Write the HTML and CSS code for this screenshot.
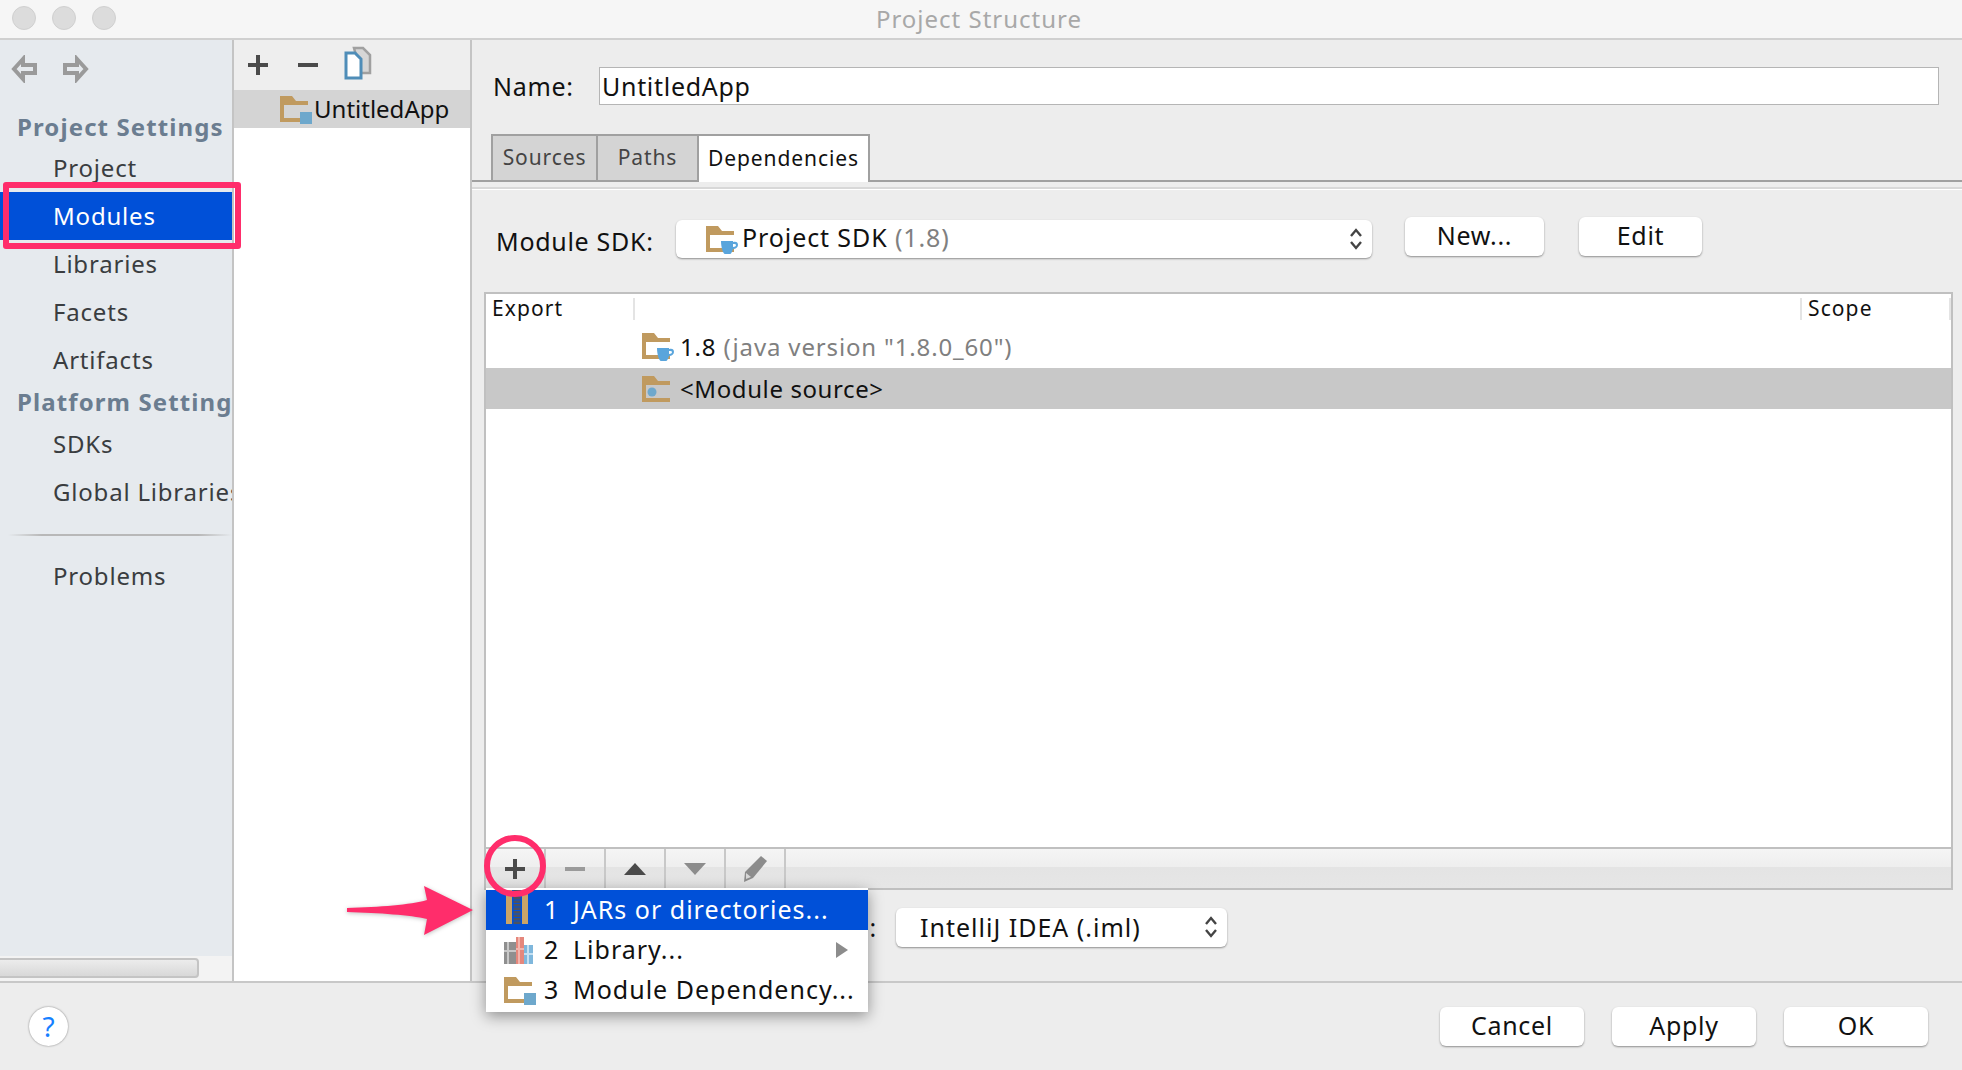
FILE: index.html
```html
<!DOCTYPE html>
<html lang="en">
<head>
    <meta charset="UTF-8">
    <title>Project Structure</title>
    <link rel="stylesheet" href="styles.css">
</head>
<body>
    <svg class="defs" width="0" height="0">
        <symbol id="folder" viewBox="0 0 30 26">
            <path fill="#c09a5f" fill-rule="evenodd" d="M0 0h12l4 5h12v21H0zM4 9v13h24V9z"/>
        </symbol>
    </svg>

    <div class="window">
        <div class="titlebar">
            <div class="lights"><i></i><i></i><i></i></div>
            <div class="title">Project Structure</div>
        </div>

        <div class="content">
            <!-- left nav -->
            <div class="sidebar">
                <div class="history">
                    <svg width="28" height="28" viewBox="0 0 28 28"><path fill="none" stroke="#9a9a9a" stroke-width="4" d="M13 4L4 14l9 10v-6h12v-8H13z"/></svg>
                    <svg width="28" height="28" viewBox="0 0 28 28"><path fill="none" stroke="#9a9a9a" stroke-width="4" d="M15 4l9 10-9 10v-6H3v-8h12z"/></svg>
                </div>
                <div class="nav">
                    <div class="nav-head first">Project Settings</div>
                    <div class="nav-item">Project</div>
                    <div class="nav-item active">Modules</div>
                    <div class="nav-item">Libraries</div>
                    <div class="nav-item">Facets</div>
                    <div class="nav-item">Artifacts</div>
                    <div class="nav-head">Platform Settings</div>
                    <div class="nav-item">SDKs</div>
                    <div class="nav-item">Global Libraries</div>
                    <div class="nav-sep"></div>
                    <div class="nav-item">Problems</div>
                </div>
                <div class="scrollbar"><div class="thumb"></div></div>
            </div>

            <!-- module list -->
            <div class="modules">
                <div class="mod-toolbar">
                    <svg width="20" height="20" viewBox="0 0 20 20"><path fill="#4a4a4a" d="M8 0h4v8h8v4h-8v8H8v-8H0V8h8z"/></svg>
                    <svg width="20" height="20" viewBox="0 0 20 20"><path fill="#4a4a4a" d="M0 8h20v4H0z"/></svg>
                    <svg class="copy-icon" width="30" height="34" viewBox="0 0 30 34">
                        <path fill="#d6d6d6" stroke="#a0a0a0" stroke-width="2.5" d="M11 2h9l7 7v18h-9z"/>
                        <path fill="#fff" stroke="#4f8db8" stroke-width="3" d="M3 7h9l6 6v19H3z"/>
                    </svg>
                </div>
                <div class="mod-row">
                    <span class="folder-icon">
                        <svg width="30" height="26"><use href="#folder"/></svg>
                        <b class="dot-square"></b>
                    </span>
                    <span class="mod-name">UntitledApp</span>
                </div>
            </div>

            <!-- main panel -->
            <div class="main">
                <div class="name-row">
                    <label>Name:</label>
                    <div class="text-field">UntitledApp</div>
                </div>
                <div class="tabs">
                    <div class="tab">Sources</div>
                    <div class="tab">Paths</div>
                    <div class="tab current">Dependencies</div>
                </div>
                <div class="tab-rule"></div>
                <div class="sdk-row">
                    <label>Module SDK:</label>
                    <div class="combo sdk-combo">
                        <span class="folder-icon">
                            <svg width="30" height="26"><use href="#folder"/></svg>
                            <svg class="cup" width="17" height="13" viewBox="0 0 17 13"><path fill="#5aa5dc" d="M0 0h12v1c4-1 5 1 5 3s-2 4-5 4c-1 3-2 5-3 5H4C2 13 0 6 0 0zm12 3v3c2 0 3-1 3-2s-1-1-3-1z"/></svg>
                        </span>
                        <span class="sdk-text">Project SDK <em>(1.8)</em></span>
                        <svg class="updown" width="14" height="24" viewBox="0 0 14 24"><path fill="none" stroke="#444" stroke-width="2.4" d="M2 9l5-6 5 6M2 15l5 6 5-6"/></svg>
                    </div>
                    <div class="btn new-btn">New...</div>
                    <div class="btn edit-btn">Edit</div>
                </div>

                <div class="table">
                    <div class="thead">
                        <div class="th export">Export</div>
                        <div class="th blank"></div>
                        <div class="th scope">Scope</div>
                    </div>
                    <div class="tbody">
                        <div class="tr">
                            <span class="folder-icon">
                                <svg width="30" height="26"><use href="#folder"/></svg>
                                <svg class="cup" width="17" height="13" viewBox="0 0 17 13"><path fill="#5aa5dc" d="M0 0h12v1c4-1 5 1 5 3s-2 4-5 4c-1 3-2 5-3 5H4C2 13 0 6 0 0zm12 3v3c2 0 3-1 3-2s-1-1-3-1z"/></svg>
                            </span>
                            <span>1.8 <em>(java version "1.8.0_60")</em></span>
                        </div>
                        <div class="tr selected">
                            <span class="folder-icon">
                                <svg width="30" height="26"><use href="#folder"/><circle cx="10" cy="16" r="4.5" fill="#6ea8cc"/></svg>
                            </span>
                            <span>&lt;Module source&gt;</span>
                        </div>
                    </div>
                    <div class="table-tools">
                        <div class="tool">
                            <svg width="20" height="20" viewBox="0 0 20 20"><path fill="#4a4a4a" d="M8 0h4v8h8v4h-8v8H8v-8H0V8h8z"/></svg>
                        </div>
                        <div class="tool">
                            <svg width="20" height="20" viewBox="0 0 20 20"><path fill="#9a9a9a" d="M0 8h20v4H0z"/></svg>
                        </div>
                        <div class="tool">
                            <svg width="22" height="12" viewBox="0 0 22 12"><path fill="#4a4a4a" d="M11 0l11 12H0z"/></svg>
                        </div>
                        <div class="tool">
                            <svg width="22" height="12" viewBox="0 0 22 12"><path fill="#8c8c8c" d="M11 12L0 0h22z"/></svg>
                        </div>
                        <div class="tool">
                            <svg width="24" height="26" viewBox="0 0 24 26"><path fill="#8c8c8c" d="M18 0l6 5-14 17-9 4 1-10z"/><path fill="#d8d8d8" d="M3 17l5 4-5 2z"/></svg>
                        </div>
                    </div>
                </div>

                <div class="format-row">
                    <label>:</label>
                    <div class="combo format-combo">
                        <span>IntelliJ IDEA (.iml)</span>
                        <svg class="updown" width="14" height="24" viewBox="0 0 14 24"><path fill="none" stroke="#444" stroke-width="2.4" d="M2 9l5-6 5 6M2 15l5 6 5-6"/></svg>
                    </div>
                </div>
            </div>
        </div>

        <div class="footer">
            <div class="help">?</div>
            <div class="footer-btns">
                <div class="btn">Cancel</div>
                <div class="btn">Apply</div>
                <div class="btn">OK</div>
            </div>
        </div>

        <!-- add dependency menu -->
        <div class="popup">
            <div class="menu-row on">
                <span class="menu-icon zip">
                    <svg width="22" height="34" viewBox="0 0 22 34">
                        <path fill="#c9a468" d="M0 0h6v34H0zM16 0h6v34h-6z"/>
                        <path fill="none" stroke="#4a5262" stroke-width="7" stroke-dasharray="2.5 1" d="M11 0v34"/>
                    </svg>
                </span>
                <span class="num">1</span><span class="label">JARs or directories...</span>
            </div>
            <div class="menu-row">
                <span class="menu-icon">
                    <svg width="29" height="27" viewBox="0 0 29 27">
                        <path fill="#8f8f8f" d="M0 5h12v22H0z"/>
                        <path fill="#c8c8c8" d="M3 5h2v22H3zM0 13h12v2H0z"/>
                        <path fill="#e5877c" d="M12 0h8v27h-8z"/>
                        <path fill="#f3b5ad" d="M14 0h2v27h-2zM12 11h8v2h-8z"/>
                        <path fill="#7fb7dc" d="M20 8h9v19h-9z"/>
                        <path fill="#c5e0f2" d="M23 8h2v19h-2zM20 16h9v2h-9z"/>
                    </svg>
                </span>
                <span class="num">2</span><span class="label">Library...</span>
                <i class="submenu"></i>
            </div>
            <div class="menu-row">
                <span class="menu-icon">
                    <span class="folder-icon">
                        <svg width="30" height="26"><use href="#folder"/></svg>
                        <b class="dot-square"></b>
                    </span>
                </span>
                <span class="num">3</span><span class="label">Module Dependency...</span>
            </div>
        </div>

        <!-- annotations -->
        <div class="mark-box"></div>
        <div class="mark-circle"></div>
        <svg class="mark-arrow" width="140" height="64" viewBox="0 0 140 64">
            <path fill="#ff2d6b" d="M7 28C40 27 70 25 87 20L84 6l49 24-49 25 3-16C70 35 40 33 7 32z"/>
        </svg>
    </div>
</body>
</html>
```

FILE: styles.css
```css
*{
    padding: 0;
    margin: 0;
    box-sizing: border-box;
}

body{
    width: 1962px;
    height: 1070px;
    overflow: hidden;
    font-family: "Noto Sans", sans-serif;
    font-size: 25px;
    letter-spacing: .7px;
    color: #111;
    background-color: #ededed;
}

.defs{
    display: block;
}

em{
    font-style: normal;
    color: #808080;
}

.window{
    width: 1962px;
    height: 1070px;
    display: flex;
    flex-direction: column;
    position: relative;
}

/* title bar */
.titlebar{
    height: 40px;
    flex: none;
    display: flex;
    align-items: center;
    justify-content: center;
    position: relative;
    background-color: #f6f6f6;
    border-bottom: 2px solid #d0d0d0;
}

.lights{
    position: absolute;
    left: 12px;
    top: 6px;
    display: flex;
    gap: 16px;
}

.lights i{
    width: 24px;
    height: 24px;
    border-radius: 50%;
    background-color: #dcdcdc;
    border: 1px solid #d0d0d0;
}

.title{
    color: #a8a8a8;
    font-size: 24px;
    letter-spacing: 1px;
    padding: 0 0 2px 0;
    margin-left: -4px;
}

.content{
    flex: 1;
    display: flex;
    min-height: 0;
    border-bottom: 2px solid #c8c8c8;
}

/* left nav */
.sidebar{
    width: 234px;
    flex: none;
    display: flex;
    flex-direction: column;
    background-color: #e6eaee;
    border-right: 2px solid #c4c4c4;
    overflow: hidden;
}

.history{
    height: 70px;
    flex: none;
    display: flex;
    gap: 24px;
    padding: 15px 0 0 10px;
}

.nav{
    flex: 1;
    white-space: nowrap;
    font-size: 24px;
    letter-spacing: .8px;
}

.nav-head{
    height: 36px;
    line-height: 36px;
    padding-left: 17px;
    font-weight: 700;
    letter-spacing: 1.1px;
    color: #6b7d90;
}

.nav-head.first{
    height: 34px;
    line-height: 34px;
}

.nav-item{
    height: 48px;
    line-height: 48px;
    padding-left: 53px;
    color: #3a3d40;
}

.nav-item.active{
    background-color: #0050d8;
    color: #fff;
}

.nav-sep{
    height: 2px;
    margin: 18px 0 16px 8px;
    background: linear-gradient(to right, transparent, #b8b8b8 15%, #b8b8b8 85%, transparent);
}

.scrollbar{
    height: 25px;
    flex: none;
    padding-top: 2px;
    background-color: #f3f3f3;
}

.thumb{
    width: 199px;
    height: 20px;
    border: 2px solid #c4c4c4;
    border-left: 0;
    border-radius: 0 4px 4px 0;
    background: linear-gradient(#ececec, #d8d8d8);
}

/* module list */
.modules{
    width: 238px;
    flex: none;
    background-color: #fff;
    border-right: 2px solid #c4c4c4;
}

.mod-toolbar{
    height: 50px;
    display: flex;
    align-items: center;
    gap: 30px;
    padding-left: 14px;
    background-color: #eee;
}

.copy-icon{
    margin: -4px 0 0 -5px;
}

.mod-row{
    height: 38px;
    display: flex;
    align-items: center;
    gap: 4px;
    padding-left: 46px;
    background-color: #d4d4d4;
    font-size: 24px;
    letter-spacing: 0;
}

.mod-name{
    margin-top: -2px;
}

.folder-icon{
    width: 30px;
    height: 26px;
    flex: none;
    display: block;
    position: relative;
}

.folder-icon svg{
    display: block;
}

.dot-square{
    position: absolute;
    right: -2px;
    bottom: -2px;
    width: 12px;
    height: 12px;
    background-color: #6ea8cc;
}

.folder-icon .cup{
    position: absolute;
    right: -2px;
    bottom: -2px;
}

/* main panel */
.main{
    flex: 1;
    min-width: 0;
    padding: 27px 0 0;
}

.name-row{
    height: 38px;
    display: flex;
    align-items: center;
    margin: 0 23px 0 21px;
}

.name-row label{
    width: 106px;
}

.text-field{
    flex: 1;
    height: 38px;
    line-height: 36px;
    padding-left: 2px;
    background-color: #fff;
    border: 1px solid #b5b5b5;
}

.tabs{
    height: 48px;
    display: flex;
    margin-top: 29px;
    padding-left: 19px;
    border-bottom: 2px solid #a0a0a0;
    font-size: 21px;
    letter-spacing: .9px;
}

.tab{
    height: 48px;
    display: flex;
    align-items: center;
    justify-content: center;
    padding-bottom: 3px;
    background-color: #d4d4d4;
    color: #444;
    border: 2px solid #a0a0a0;
    border-left-width: 2px;
}

.tab:nth-child(1){
    width: 107px;
}

.tab:nth-child(2){
    width: 101px;
    border-left: 0;
}

.tab.current{
    width: 171px;
    border-left: 0;
    border-bottom: 0;
    background-color: #fff;
    color: #111;
}

.tab-rule{
    height: 3px;
    margin-top: 5px;
    background-color: #d8d8d8;
    border-bottom: 1px solid #fff;
}

.sdk-row{
    height: 42px;
    display: flex;
    align-items: flex-start;
    margin-top: 27px;
    padding-left: 24px;
}

.sdk-row label{
    width: 180px;
    padding-top: 7px;
}

.combo{
    height: 38px;
    display: flex;
    align-items: center;
    position: relative;
    background-color: #fff;
    border-radius: 6px;
    box-shadow: 0 1px 2px rgba(0, 0, 0, .4);
}

.sdk-combo{
    width: 696px;
    margin-top: 3px;
    padding-left: 30px;
    gap: 6px;
}

.sdk-text{
    margin-top: -4px;
    letter-spacing: .9px;
}

.updown{
    position: absolute;
    right: 9px;
    top: 7px;
}

.btn{
    width: 144px;
    height: 39px;
    display: flex;
    align-items: center;
    justify-content: center;
    padding-bottom: 3px;
    background-color: #fff;
    border-radius: 6px;
    box-shadow: 0 1px 2px rgba(0, 0, 0, .4);
}

.new-btn{
    width: 139px;
    margin-left: 33px;
}

.edit-btn{
    width: 123px;
    margin-left: 35px;
}

.table{
    height: 598px;
    margin: 33px 9px 0 12px;
    display: flex;
    flex-direction: column;
    background-color: #fff;
    border: 2px solid #c0c0c0;
    font-size: 21px;
    letter-spacing: 1.1px;
}

.thead{
    height: 34px;
    flex: none;
    display: flex;
    align-items: flex-start;
    padding-top: 4px;
}

.th{
    height: 22px;
    line-height: 20px;
    padding-left: 6px;
}

.export{
    width: 149px;
    border-right: 2px solid #e4e4e4;
}

.blank{
    flex: 1;
}

.scope{
    width: 151px;
    border-left: 2px solid #e4e4e4;
    border-right: 2px solid #e4e4e4;
}

.tbody{
    flex: 1;
    font-size: 24px;
    letter-spacing: .85px;
}

.tr{
    height: 40px;
    display: flex;
    align-items: center;
    gap: 8px;
    padding: 0 0 4px 156px;
}

.tr.selected{
    height: 41px;
    padding-bottom: 0;
    letter-spacing: .6px;
    background-color: #c8c8c8;
}

.table-tools{
    height: 41px;
    flex: none;
    display: flex;
    border-top: 2px solid #c0c0c0;
    background: linear-gradient(#f5f5f5 0, #eeeeee 47%, #e4e4e4 47%, #e6e6e6 100%);
}

.tool{
    width: 60px;
    display: flex;
    align-items: center;
    justify-content: center;
    border-right: 2px solid #c8c8c8;
}

.format-row{
    display: flex;
    align-items: center;
    height: 42px;
    margin-top: 16px;
}

.format-row label{
    width: 424px;
    padding-right: 19px;
    text-align: right;
}

.format-combo{
    width: 331px;
    height: 39px;
    padding-left: 24px;
    letter-spacing: 1px;
}

/* footer */
.footer{
    height: 87px;
    flex: none;
    display: flex;
    align-items: flex-start;
    justify-content: space-between;
    padding: 24px 34px 0 29px;
}

.help{
    width: 39px;
    height: 39px;
    border-radius: 50%;
    display: flex;
    align-items: center;
    justify-content: center;
    padding-bottom: 2px;
    background-color: #fff;
    color: #1580ff;
    font-size: 28px;
    letter-spacing: 0;
    box-shadow: 0 0 2px rgba(0, 0, 0, .5);
}

.footer-btns{
    display: flex;
    gap: 28px;
}

/* popup menu */
.popup{
    position: absolute;
    left: 486px;
    top: 888px;
    width: 382px;
    height: 124px;
    padding-top: 2px;
    background-color: #fff;
    letter-spacing: 1px;
    box-shadow: 0 4px 14px rgba(0, 0, 0, .4);
}

.menu-row{
    height: 40px;
    display: flex;
    align-items: center;
    position: relative;
    color: #111;
}

.menu-row.on{
    background-color: #0050d8;
    color: #fff;
}

.menu-icon{
    width: 58px;
    flex: none;
    padding-left: 18px;
    display: flex;
    align-items: center;
}

.menu-icon.zip{
    margin-top: -6px;
    padding-left: 20px;
}

.num{
    width: 29px;
    flex: none;
    margin-top: -2px;
}

.label{
    margin-top: -2px;
}

.submenu{
    position: absolute;
    left: 350px;
    top: 12px;
    border-left: 12px solid #8c8c8c;
    border-top: 8px solid transparent;
    border-bottom: 8px solid transparent;
}

/* red annotations over the screenshot */
.mark-box{
    position: absolute;
    left: 3px;
    top: 182px;
    width: 238px;
    height: 67px;
    border: 6px solid #ff2d6b;
    border-radius: 3px;
}

.mark-circle{
    position: absolute;
    left: 484px;
    top: 835px;
    width: 62px;
    height: 62px;
    border: 6px solid #ff2d6b;
    border-radius: 50%;
}

.mark-arrow{
    position: absolute;
    left: 340px;
    top: 880px;
    filter: drop-shadow(0 1px 2px rgba(0, 0, 0, .25));
}
```
